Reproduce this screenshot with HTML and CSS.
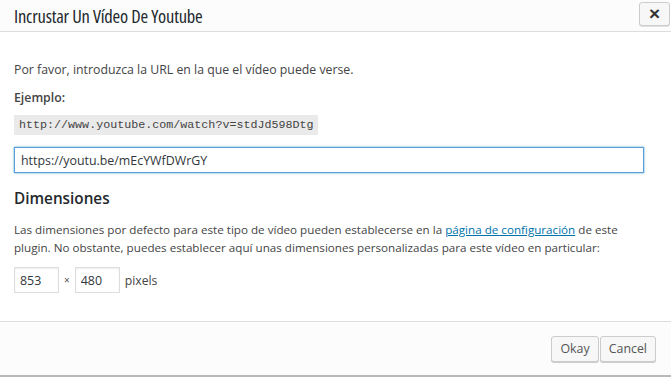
FILE: index.html
```html
<!DOCTYPE html>
<html lang="es">
<head>
<meta charset="utf-8">
<link rel="stylesheet" href="styles.css">
</head>
<body>
<div class="modal">
  <div class="modal-header">
    <h1 class="modal-title">Incrustar Un Vídeo De Youtube</h1>
    <button class="close-btn" type="button">×</button>
  </div>
  <div class="modal-body">
    <p class="intro">Por favor, introduzca la URL en la que el vídeo puede verse.</p>
    <p class="label">Ejemplo:</p>
    <div class="example"><code>http://www.youtube.com/watch?v=stdJd598Dtg</code></div>
    <input class="url-input" type="text" value="https://youtu.be/mEcYWfDWrGY">
    <h2 class="section-title">Dimensiones</h2>
    <p class="desc"><span>Las dimensiones por defecto para este tipo de vídeo pueden establecerse en la </span><a href="#">página de configuración</a><span> de este</span><br><span>plugin. No obstante, puedes establecer aquí unas dimensiones personalizadas para este vídeo en particular:</span></p>
    <div class="dims">
      <input class="dim-input" type="text" value="853">
      <span class="times">×</span>
      <input class="dim-input" type="text" value="480">
      <span class="unit">pixels</span>
    </div>
  </div>
  <div class="modal-footer">
    <button class="btn" type="button">Okay</button>
    <button class="btn" type="button">Cancel</button>
  </div>
</div>
</body>
</html>
```
FILE: styles.css
```css
html, body {
  margin: 0;
  padding: 0;
  background: #ffffff;
}
body {
  font-family: "Open Sans", "Liberation Sans", sans-serif;
  font-size: 12.3px;
  color: #444444;
  width: 671px;
  height: 377px;
  overflow: hidden;
}
.modal {
  display: flex;
  flex-direction: column;
  height: 377px;
  box-sizing: border-box;
  border-bottom: 2px solid #b9b9b9;
}
.modal-header {
  height: 32px;
  box-sizing: border-box;
  background: #fcfcfc;
  border-bottom: 1px solid #dddddd;
  display: flex;
  align-items: center;
  justify-content: space-between;
  padding-left: 14px;
  padding-right: 1px;
}
.modal-title {
  margin: 0;
  font-size: 18.5px;
  font-weight: 400;
  font-stretch: 79%;
  color: #23282d;
  letter-spacing: -0.2px;
}
.close-btn {
  width: 31px;
  height: 24px;
  margin-top: -3px;
  border: 1px solid #cccccc;
  border-radius: 3px;
  background: #f7f7f7;
  color: #333333;
  font-family: "Liberation Sans", sans-serif;
  font-size: 19px;
  font-weight: 700;
  line-height: 20px;
  padding: 0;
  box-shadow: 0 1px 0 #e0e0e0;
}
.modal-body {
  flex: 1;
  padding: 0 14px;
}
.intro {
  margin: 28px 0 0;
  line-height: 20px;
}
.label {
  margin: 8px 0 0;
  font-weight: 600;
  line-height: 20px;
}
.example {
  margin-top: 6px;
  line-height: 20px;
}
.example code {
  display: inline-block;
  background: #eaeaea;
  font-family: "Liberation Mono", "DejaVu Sans Mono", monospace;
  font-size: 11.7px;
  padding: 0 4px 0 5px;
  color: #444444;
  line-height: 20px;
}
.url-input {
  display: block;
  box-sizing: border-box;
  width: 630px;
  height: 26px;
  margin-top: 12px;
  border: 1px solid #5b9dd9;
  box-shadow: 0 0 2px rgba(30, 140, 190, 0.8);
  font-family: "Open Sans", sans-serif;
  font-size: 12.4px;
  color: #32373c;
  padding: 0 6px;
  outline: none;
}
.section-title {
  margin: 13px 0 0;
  font-size: 15.3px;
  font-weight: 600;
  color: #23282d;
  line-height: 24px;
}
.desc {
  margin: 11px 0 0;
  font-size: 11.65px;
  line-height: 18px;
  white-space: nowrap;
}
.desc a {
  color: #0073aa;
  text-decoration: underline;
}
.dims {
  display: flex;
  align-items: center;
  margin-top: 10px;
}
.dim-input {
  box-sizing: border-box;
  width: 45px;
  height: 26px;
  border: 1px solid #dddddd;
  box-shadow: inset 0 1px 2px rgba(0, 0, 0, 0.07);
  font-family: "Open Sans", sans-serif;
  font-size: 12.4px;
  color: #32373c;
  padding: 0 5px;
  outline: none;
}
.times {
  font-size: 10px;
  margin: 0 5px 0 5px;
  color: #555555;
}
.unit {
  margin-left: 5px;
  font-size: 12.2px;
}
.modal-footer {
  height: 54px;
  box-sizing: border-box;
  background: #fcfcfc;
  border-top: 1px solid #dddddd;
  display: flex;
  align-items: center;
  justify-content: flex-end;
  padding-right: 15px;
  gap: 1px;
}
.btn {
  height: 26px;
  box-sizing: border-box;
  border: 1px solid #cccccc;
  border-radius: 3px;
  background: #f7f7f7;
  box-shadow: 0 1px 0 #cccccc;
  color: #555555;
  font-family: "Open Sans", sans-serif;
  font-size: 12.4px;
  padding: 0 8px 1px;
}
```
